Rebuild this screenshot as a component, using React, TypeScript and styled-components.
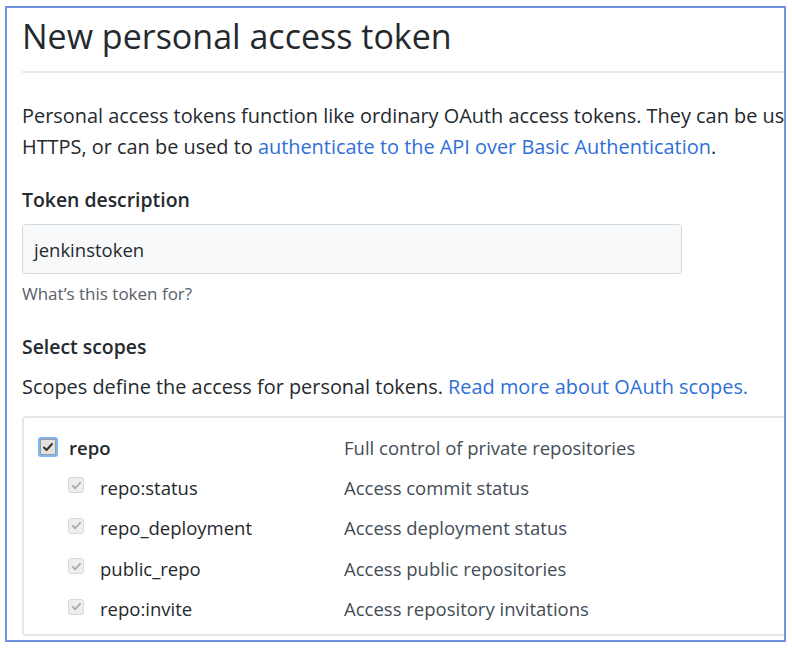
import React from "react";
import styled, { createGlobalStyle } from "styled-components";

const Global = createGlobalStyle`
  html, body { margin: 0; padding: 0; background: #ffffff; }
  body { font-family: "Open Sans", "Noto Sans", sans-serif; color: #24292e; }
`;

const Frame = styled.div`
  margin: 6px 0 0 5px;
  width: 777px;
  height: 632px;
  border: 2px solid #6f93dc;
  overflow: hidden;
  background: #fff;
`;

const Content = styled.div`
  width: 1000px;
  padding-left: 15px;
`;

const Title = styled.h2`
  margin: 0;
  padding-top: 8px;
  height: 65px;
  box-sizing: border-box;
  font-size: 34px;
  font-weight: 400;
  line-height: 40px;
  color: #24292e;
  border-bottom: 2px solid #e7e9ec;
`;

const Para = styled.p<{ $top: number }>`
  margin: ${(p) => p.$top}px 0 0;
  font-size: 19.9px;
  line-height: 31px;
  color: #24292e;
  white-space: nowrap;
`;

const Link = styled.a`
  color: #2f6fd6;
  text-decoration: none;
`;

const Label = styled.div<{ $top: number }>`
  margin-top: ${(p) => p.$top}px;
  font-size: 19.4px;
  font-weight: 600;
  line-height: 28px;
`;

const Input = styled.div`
  margin-top: 10px;
  width: 660px;
  height: 50px;
  box-sizing: border-box;
  border: 1px solid #d5d9de;
  border-radius: 4px;
  background: #f8f9fa;
  padding-left: 11px;
  display: flex;
  align-items: center;
  font-size: 18.5px;
  color: #24292e;
`;

const Note = styled.div`
  margin-top: 9px;
  font-size: 17px;
  line-height: 22px;
  color: #586069;
`;

const ScopeBox = styled.div`
  margin-top: 14px;
  border: 2px solid #e4e6e9;
  border-right: none;
  border-radius: 4px 0 0 4px;
  height: 220px;
  box-sizing: border-box;
  padding-top: 10px;
`;

const Row = styled.div<{ $sub?: boolean }>`
  display: grid;
  grid-template-columns: ${(p) => (p.$sub ? "44px 32px 244px" : "14px 31px 275px")} 1fr;
  align-items: center;
  height: ${(p) => (p.$sub ? 40.5 : 39)}px;
`;

const Spacer = styled.span``;

const MainBox = styled.span`
  width: 20px;
  height: 20px;
  box-sizing: border-box;
  border-radius: 3px;
  border: 2px solid #7cb6f7;
  background: #e2e2e2;
  box-shadow: inset 0 0 0 1px #9a9a9a;
  display: flex;
  align-items: center;
  justify-content: center;
  margin-top: -2px;
`;

const SubBox = styled.span`
  width: 16px;
  height: 16px;
  box-sizing: border-box;
  border-radius: 3px;
  border: 1px solid #d8d8d8;
  background: #eeeeee;
  display: flex;
  align-items: center;
  justify-content: center;
  margin-top: -4px;
`;

const ScopeName = styled.span<{ $bold?: boolean }>`
  font-size: 18.5px;
  font-weight: ${(p) => (p.$bold ? 600 : 400)};
  color: #24292e;
  white-space: nowrap;
`;

const ScopeDesc = styled.span`
  font-size: 18.5px;
  color: #444d56;
  white-space: nowrap;
`;

const Check = ({ color, size }: { color: string; size: number }) => (
  <svg width={size} height={size} viewBox="0 0 12 12">
    <path d="M2 6.5 L4.6 9 L10 3" fill="none" stroke={color} strokeWidth="2" strokeLinecap="round" strokeLinejoin="round" />
  </svg>
);

const subs: [string, string][] = [
  ["repo:status", "Access commit status"],
  ["repo_deployment", "Access deployment status"],
  ["public_repo", "Access public repositories"],
  ["repo:invite", "Access repository invitations"],
];

export default function App() {
  return (
    <>
      <Global />
      <Frame>
        <Content>
          <Title>New personal access token</Title>
          <Para $top={27}>
            Personal access tokens function like ordinary OAuth access tokens. They can be used with Git over
            <br />
            HTTPS, or can be used to <Link>authenticate to the API over Basic Authentication</Link>.
          </Para>
          <Label $top={24}>Token description</Label>
          <Input>jenkinstoken</Input>
          <Note>What’s this token for?</Note>
          <Label $top={28}>Select scopes</Label>
          <Para $top={10}>
            Scopes define the access for personal tokens. <Link>Read more about OAuth scopes.</Link>
          </Para>
          <ScopeBox>
            <Row>
              <Spacer />
              <MainBox>
                <Check color="#333" size={12} />
              </MainBox>
              <ScopeName $bold>repo</ScopeName>
              <ScopeDesc>Full control of private repositories</ScopeDesc>
            </Row>
            {subs.map(([n, d]) => (
              <Row $sub key={n}>
                <Spacer />
                <SubBox>
                  <Check color="#a9a9a9" size={11} />
                </SubBox>
                <ScopeName>{n}</ScopeName>
                <ScopeDesc>{d}</ScopeDesc>
              </Row>
            ))}
          </ScopeBox>
        </Content>
      </Frame>
    </>
  );
}
